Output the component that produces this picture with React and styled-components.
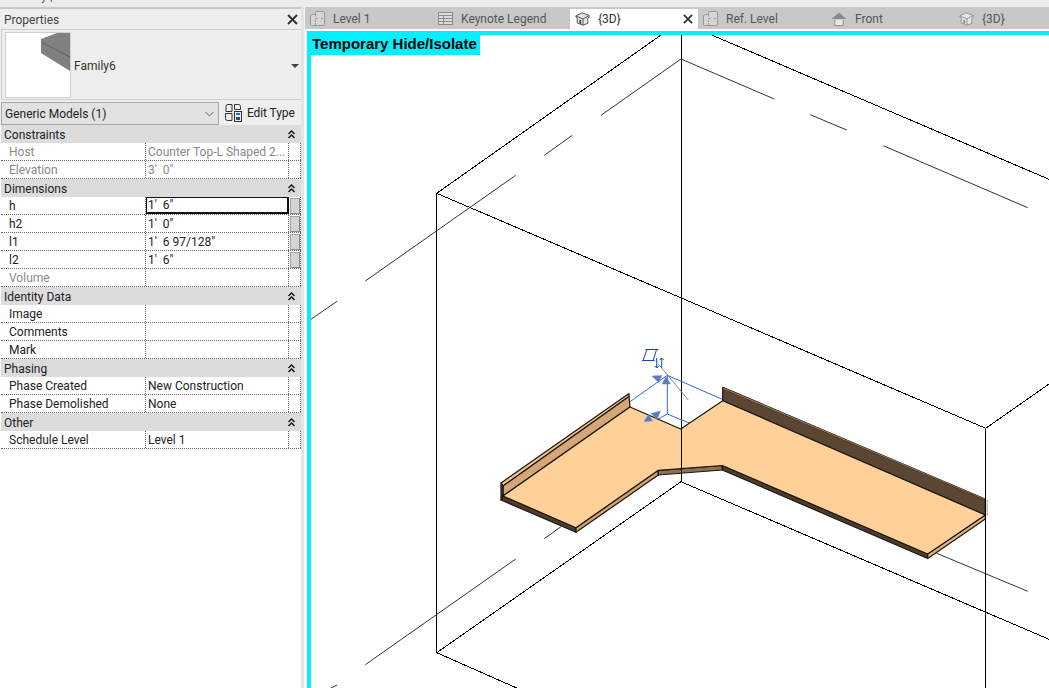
import React from 'react';
import styled, { createGlobalStyle } from 'styled-components';

const GlobalStyle = createGlobalStyle`
  html, body { margin: 0; padding: 0; background: #fff; }
  body { font-family: Roboto, "Noto Sans", sans-serif; font-size: 12px; color: #222; }
`;

const Page = styled.div`
  width: 1049px;
  height: 688px;
  display: flex;
  flex-direction: column;
  overflow: hidden;
`;

const Ribbon = styled.div`
  height: 7px;
  flex: none;
  background: #ececec;
  overflow: hidden;
  padding-left: 10px;
  color: #444;
  line-height: 16px;

  span { display: block; margin-top: -12px; }
`;

const Main = styled.div`
  flex: 1;
  display: flex;
  min-height: 0;
`;

const Panel = styled.aside`
  width: 301px;
  flex: none;
  display: flex;
  flex-direction: column;
  background: #eeeeee;
  border-top: 2px solid #c8c8c8;
`;

const Sash = styled.div`
  width: 3px;
  flex: none;
  background: #e4e4e4;
  border-right: 1px solid #f4f4f4;
`;

const PanelHeader = styled.div`
  height: 20px;
  flex: none;
  display: flex;
  align-items: center;
  justify-content: space-between;
  padding: 1px 3px 0 4px;
  box-sizing: border-box;
  color: #444;
`;

const Preview = styled.div`
  height: 69px;
  flex: none;
  margin-left: 1px;
  display: flex;
  align-items: center;
  gap: 3px;
  padding-left: 3px;
  border: 1px solid #cfcfcf;
  box-sizing: content-box;
  width: 296px;
  color: #333;
`;

const Thumb = styled.div`
  width: 64px;
  height: 64px;
  background: #fff;
  border: 1px solid #cfcfcf;
  overflow: hidden;
  line-height: 0;
`;

const PreviewName = styled.span`
  flex: 1;
  margin-top: 2px;
`;

const CaretDown = styled.i`
  width: 0;
  height: 0;
  margin: 3px 2px 0 0;
  border-left: 4px solid transparent;
  border-right: 4px solid transparent;
  border-top: 4px solid #444;
`;

const TypeRow = styled.div`
  height: 23px;
  flex: none;
  margin: 2px 0 0 1px;
  display: flex;
  align-items: center;
`;

const TypeSelect = styled.div`
  display: flex;
  align-items: center;
  justify-content: space-between;
  padding: 1px 4px 0 3px;
  box-sizing: border-box;
  height: 23px;
  width: 218px;
  border: 1px solid #a8a8a8;
  background: #e2e2e2;
  color: #222;
`;

const EditType = styled.div`
  display: flex;
  align-items: center;
  gap: 5px;
  margin: -2px 0 0 6px;
  color: #222;
  letter-spacing: -0.1px;
`;

const Table = styled.div`
  flex: 1;
  background: #fff;
  padding-left: 1px;
`;

const SectionHead = styled.div`
  height: 18px;
  display: flex;
  align-items: center;
  justify-content: space-between;
  padding: 1px 6px 0 3px;
  box-sizing: border-box;
  background: #dcdcdc;
  color: #222;
`;

const Row = styled.div`
  height: 18px;
  display: grid;
  grid-template-columns: 145px 143px 12px;
  box-sizing: border-box;
  border-bottom: 1px dotted #666;
`;

const Cell = styled.div`
  display: flex;
  align-items: center;
  box-sizing: border-box;
  border-right: 1px dotted #666;
  white-space: pre;
  overflow: hidden;
  padding-left: ${({ $indent }) => $indent}px;
  color: ${({ $muted }) => ($muted ? '#8a8a8a' : '#222')};
`;

const ValueEdit = styled(Cell)`
  border: 1px solid #111;
  border-bottom-width: 2px;
  border-right-width: 2px;
  padding-left: 1px;
`;

const ButtonCell = styled(Cell)`
  justify-content: center;
  padding: 0;
`;

const AssocButton = styled.div`
  width: 8px;
  height: 14px;
  background: #d4d4d4;
  border: 1px solid #a4a4a4;
  border-right-color: #8c8c8c;
  border-bottom-color: #8c8c8c;
`;

const ViewArea = styled.section`
  flex: 1;
  min-width: 0;
  display: flex;
  flex-direction: column;
`;

const TabStrip = styled.div`
  height: 22px;
  flex: none;
  display: flex;
  background: #c8c8c8;
  color: #555;
`;

const Tab = styled.div`
  width: ${({ $width }) => $width}px;
  flex: none;
  display: flex;
  align-items: center;
  gap: 8px;
  padding: ${({ $active }) => ($active ? '0 5px 2px 5px' : '1px 0 0 5px')};
  box-sizing: border-box;
  height: 22px;
  margin-top: ${({ $active }) => ($active ? '2px' : '0')};
  background: ${({ $active }) => ($active ? '#fff' : 'transparent')};
  color: ${({ $active }) => ($active ? '#333' : '#555')};
  position: relative;
  z-index: 1;
`;

const TabLabel = styled.span`
  flex: 1;
  white-space: nowrap;
`;

const Gutter = styled.div`
  flex: 1;
  min-height: 0;
  padding: 2px 0 0 2px;
  background: #fff;
  display: flex;
`;

const Canvas = styled.div`
  flex: 1;
  position: relative;
  border-top: 4px solid #00f0ff;
  border-left: 4px solid #00f0ff;
  background: #fff;
  line-height: 0;
`;

const ModeBadge = styled.div`
  position: absolute;
  top: 0;
  left: 0;
  height: 20px;
  width: 169px;
  padding-left: 1px;
  box-sizing: border-box;
  background: #00f0ff;
  color: #000;
  font: bold 15px/17px "Liberation Sans", Arial, sans-serif;
  white-space: nowrap;
`;

const CloseIcon = ({ size = 11, color = '#333' }) => (
  <svg width={size} height={size} viewBox="0 0 11 11">
    <path d="M1 1 L10 10 M10 1 L1 10" stroke={color} strokeWidth="2" fill="none" />
  </svg>
);

const Chevrons = () => (
  <svg width="7" height="9" viewBox="0 0 7 9">
    <path d="M0.5 4 L3.5 1 L6.5 4 M0.5 8 L3.5 5 L6.5 8" stroke="#111" strokeWidth="1.4" fill="none" />
  </svg>
);

const SelectChevron = () => (
  <svg width="9" height="6" viewBox="0 0 9 6">
    <path d="M0.5 1 L4.5 5 L8.5 1" stroke="#666" strokeWidth="1" fill="none" />
  </svg>
);

const EditTypeIcon = () => (
  <svg width="17" height="18" viewBox="0 0 17 18" fill="none" stroke="#333">
    <path d="M3 .5h4v7h-6v-5a2 2 0 0 1 2-2z" />
    <path d="M9.500 .5h4a2 2 0 0 1 2 2v3h-6z" />
    <path d="M.5 9.500h6.500v7h-4.500a2 2 0 0 1-2-2z" />
    <rect x="9.500" y="7.500" width="7" height="10" fill="#e8eef6" />
    <rect x="11" y="9" width="4" height="2" fill="#2f6fb8" stroke="none" />
    <rect x="11" y="13" width="4" height="3" fill="#2f4f78" stroke="none" />
  </svg>
);

const PlanIcon = () => (
  <svg width="15" height="15" viewBox="0 0 15 15" fill="none" stroke="#969696">
    <path d="M.5 5.500a2 2 0 0 1 2-2h3v-2a1 1 0 0 1 1-1h7a1 1 0 0 1 1 1v12a1 1 0 0 1-1 1h-12a1 1 0 0 1-1-1z" fill="#d6d6d6" />
    <path d="M5.500 3.500v3M5.500 9v5.500M5.500 7.500h3M11 7.500h3.500" strokeDasharray="2 1" />
  </svg>
);

const LegendIcon = () => (
  <svg width="15" height="13" viewBox="0 0 15 13" fill="none" stroke="#8a8a8a">
    <rect x=".5" y=".5" width="14" height="12" fill="#dedede" />
    <path d="M.5 3.500h14M.5 6.500h14M.5 9.500h14M5.500 3.500v9" />
  </svg>
);

const HouseIcon = ({ color }) => (
  <svg width="15" height="16" viewBox="0 0 17 16" fill="none" stroke={color}>
    <path d="M8 1 L16 4 V6 L14.500 7 V13 L9 15 L2.500 12.500 V6.500 L1 5.500 V4.500 Z" fill="#e6e6e6" />
    <path d="M1 4.500 L9 8 L16 4 M9 8 V15" />
    <path d="M5 8.500 V13 L7 14 V9.500 Z" fill={color} stroke="none" />
  </svg>
);

const FrontIcon = () => (
  <svg width="16" height="16" viewBox="0 0 17 16">
    <path d="M8.500 1 L16.500 8 H.5 Z" fill="#8a8a8a" />
    <path d="M4 9 V15 H13 V9" fill="#e8e8e8" stroke="#8a8a8a" />
  </svg>
);

// page coordinates: the viewBox starts where the canvas starts
const frameLines = [
  [436.7, 193.3, 436.7, 652.7],
  [436.7, 193.3, 661, 35],
  [436.7, 193.3, 985.7, 428.3],
  [681, 35, 681, 481.7],
  [985.7, 428.3, 985.7, 688],
  [985.7, 428.3, 1049, 384],
  [711.7, 35, 1049, 179.3],
  [436.7, 652.7, 681, 481.7],
  [681, 481.7, 1049, 639.3],
  [436.7, 652.7, 516.7, 688],
];

const dashLines = [
  [681, 59, 601, 115.3],
  [572.3, 135.3, 544.3, 155.3],
  [515.7, 175.3, 365.3, 281],
  [337, 301.3, 311, 319.3],
  [681, 59, 774.3, 99],
  [810.3, 114.7, 846.7, 130],
  [883.3, 145.7, 1027.7, 207.7],
  [561, 526.7, 544.3, 538.7],
  [515.7, 559, 365.3, 664.7],
  [337, 685, 331, 688],
  [936.7, 553.3, 1027.7, 591.3],
];

const gizmoLines = [
  [667.3, 375.3, 630, 401.7],
  [667.3, 375.3, 722.3, 399.3],
  [667.3, 375.3, 667.3, 414],
  [667.3, 414, 656.7, 420],
  [667.3, 414, 690, 423.3],
];

const gizmoArrows = [
  '652,376 662,375.500 658.500,382.500',
  '662,384 670.500,384 666,376.500',
  '651,413.500 660.500,411 657,419.500',
  '644,421.500 652.500,421 648.500,414.500',
];

const Line = ({ l, ...rest }) => <line x1={l[0]} y1={l[1]} x2={l[2]} y2={l[3]} {...rest} />;

const ModelView = () => (
  <svg width="738" height="653" viewBox="311 35 738 653">
    <g stroke="#000" strokeWidth="1" shapeRendering="crispEdges">
      {frameLines.map((l, i) => <Line key={i} l={l} />)}
    </g>
    <g stroke="#333" strokeWidth="1">
      {dashLines.map((l, i) => <Line key={i} l={l} />)}
    </g>
    <g stroke="#3468d0" strokeWidth="1">
      {gizmoLines.map((l, i) => <Line key={i} l={l} />)}
    </g>

    <g stroke="#1c1610" strokeWidth="1.2" strokeLinejoin="round">
      {/* left end wall */}
      <polygon points="501,483 503,486 629,396.500 629,393.500" fill="#f2c48e" />
      <polygon points="503,486 629,396.500 630,407 503,496" fill="#d5a777" />
      <polygon points="501,483 503,486 503,496 501,500" fill="#4e3c2a" />
      <polygon points="501,500 503,496 576,527.700 576,532.300" fill="#4e3c2a" />
      {/* front edges */}
      <polygon points="576,527.700 658.300,470.300 658.300,475 576,532.300" fill="#cfa274" />
      <polygon points="658.300,470.300 722.300,465.500 722.300,470 658.300,475" fill="#8f7052" />
      <polygon points="722.300,465.500 927.700,554 927.700,558.500 722.300,470" fill="#4e3c2a" />
      <polygon points="927.700,554 985.300,515 985.300,519 927.700,558.500" fill="#e2b183" />
      {/* back right wall */}
      <polygon points="722.700,387.300 985.300,499.300 985.300,515 722.700,400.700" fill="#5a4632" />
      <polygon points="723.500,387.500 985.300,498.800 985.300,500 722.700,388.800" fill="#b8946a" strokeWidth="0.5" />
      {/* worktop */}
      <polygon
        points="630,407 680.700,429 722.700,400.700 985.300,515 927.700,554 722.300,465.500 658.300,470.300 576,527.700 503,496"
        fill="#ffd097"
      />
    </g>

    <line x1="681" y1="429" x2="681" y2="481.700" stroke="#000" shapeRendering="crispEdges" />
    <line x1="985.700" y1="428" x2="985.700" y2="688" stroke="#000" shapeRendering="crispEdges" />
    <rect x="986.500" y="500" width="1.500" height="16" fill="#bbb" />
    <line x1="658.300" y1="364" x2="688.300" y2="400" stroke="#8a8a8a" />

    {gizmoArrows.map((p, i) => <polygon key={i} points={p} fill="#5a7cc0" stroke="#6f8bc4" strokeWidth="0.5" />)}

    <g stroke="#0a46c8" strokeWidth="1" fill="none">
      <path d="M645.500 349.500 H658.500 M647 349 L643 361 M656.700 349 L653 361 M642 360.500 H654.500" />
      <path d="M661.700 358 V368 M659.700 360 L661.700 358 L663.700 360" />
      <path d="M656.700 358 V368 M654.700 366 L656.700 368 L658.700 366" />
    </g>
  </svg>
);

const tabs = [
  { label: 'Level 1', width: 128, icon: <PlanIcon /> },
  { label: 'Keynote Legend', width: 137, icon: <LegendIcon /> },
  { label: '{3D}', width: 128, active: true, icon: <HouseIcon color="#444" /> },
  { label: 'Ref. Level', width: 128, icon: <PlanIcon /> },
  { label: 'Front', width: 128, icon: <FrontIcon /> },
  { label: '{3D}', width: 128, icon: <HouseIcon color="#8a8a8a" /> },
];

const sections = [
  {
    title: 'Constraints',
    rows: [
      { name: 'Host', value: 'Counter Top-L Shaped 2...', muted: true },
      { name: 'Elevation', value: `3'  0"`, muted: true },
    ],
  },
  {
    title: 'Dimensions',
    rows: [
      { name: 'h', value: `1'  6"`, button: true, editing: true },
      { name: 'h2', value: `1'  0"`, button: true },
      { name: 'l1', value: `1'  6 97/128"`, button: true },
      { name: 'l2', value: `1'  6"`, button: true },
      { name: 'Volume', value: '', muted: true },
    ],
  },
  {
    title: 'Identity Data',
    rows: [
      { name: 'Image', value: '' },
      { name: 'Comments', value: '' },
      { name: 'Mark', value: '' },
    ],
  },
  {
    title: 'Phasing',
    rows: [
      { name: 'Phase Created', value: 'New Construction' },
      { name: 'Phase Demolished', value: 'None' },
    ],
  },
  {
    title: 'Other',
    rows: [{ name: 'Schedule Level', value: 'Level 1' }],
  },
];

function PropertyRow({ row }) {
  const Value = row.editing ? ValueEdit : Cell;
  return (
    <Row>
      <Cell $indent={8} $muted={row.muted}>{row.name}</Cell>
      <Value $indent={2} $muted={row.muted}>{row.value}</Value>
      <ButtonCell>{row.button && <AssocButton />}</ButtonCell>
    </Row>
  );
}

export default function App() {
  return (
    <Page>
      <GlobalStyle />
      <Ribbon><span>Modify |</span></Ribbon>
      <Main>
        <Panel>
          <PanelHeader>
            <span>Properties</span>
            <CloseIcon />
          </PanelHeader>
          <Preview>
            <Thumb>
              <svg width="64" height="64" viewBox="0 0 64 64">
                <polygon points="35,6 51,0 64,0 64,38 35,20" fill="#808080" />
                <line x1="35" y1="9" x2="64" y2="24" stroke="#5e5e5e" />
              </svg>
            </Thumb>
            <PreviewName>Family6</PreviewName>
            <CaretDown />
          </Preview>
          <TypeRow>
            <TypeSelect>
              <span>Generic Models (1)</span>
              <SelectChevron />
            </TypeSelect>
            <EditType>
              <EditTypeIcon />
              <span>Edit Type</span>
            </EditType>
          </TypeRow>
          <Table>
            {sections.map((section) => (
              <React.Fragment key={section.title}>
                <SectionHead>
                  <span>{section.title}</span>
                  <Chevrons />
                </SectionHead>
                {section.rows.map((row) => <PropertyRow key={row.name} row={row} />)}
              </React.Fragment>
            ))}
          </Table>
        </Panel>
        <Sash />
        <ViewArea>
          <TabStrip>
            {tabs.map((tab, i) => (
              <Tab key={i} $width={tab.width} $active={tab.active}>
                {tab.icon}
                <TabLabel>{tab.label}</TabLabel>
                {tab.active && <CloseIcon size={10} />}
              </Tab>
            ))}
          </TabStrip>
          <Gutter>
            <Canvas>
              <ModelView />
              <ModeBadge>Temporary Hide/Isolate</ModeBadge>
            </Canvas>
          </Gutter>
        </ViewArea>
      </Main>
    </Page>
  );
}
